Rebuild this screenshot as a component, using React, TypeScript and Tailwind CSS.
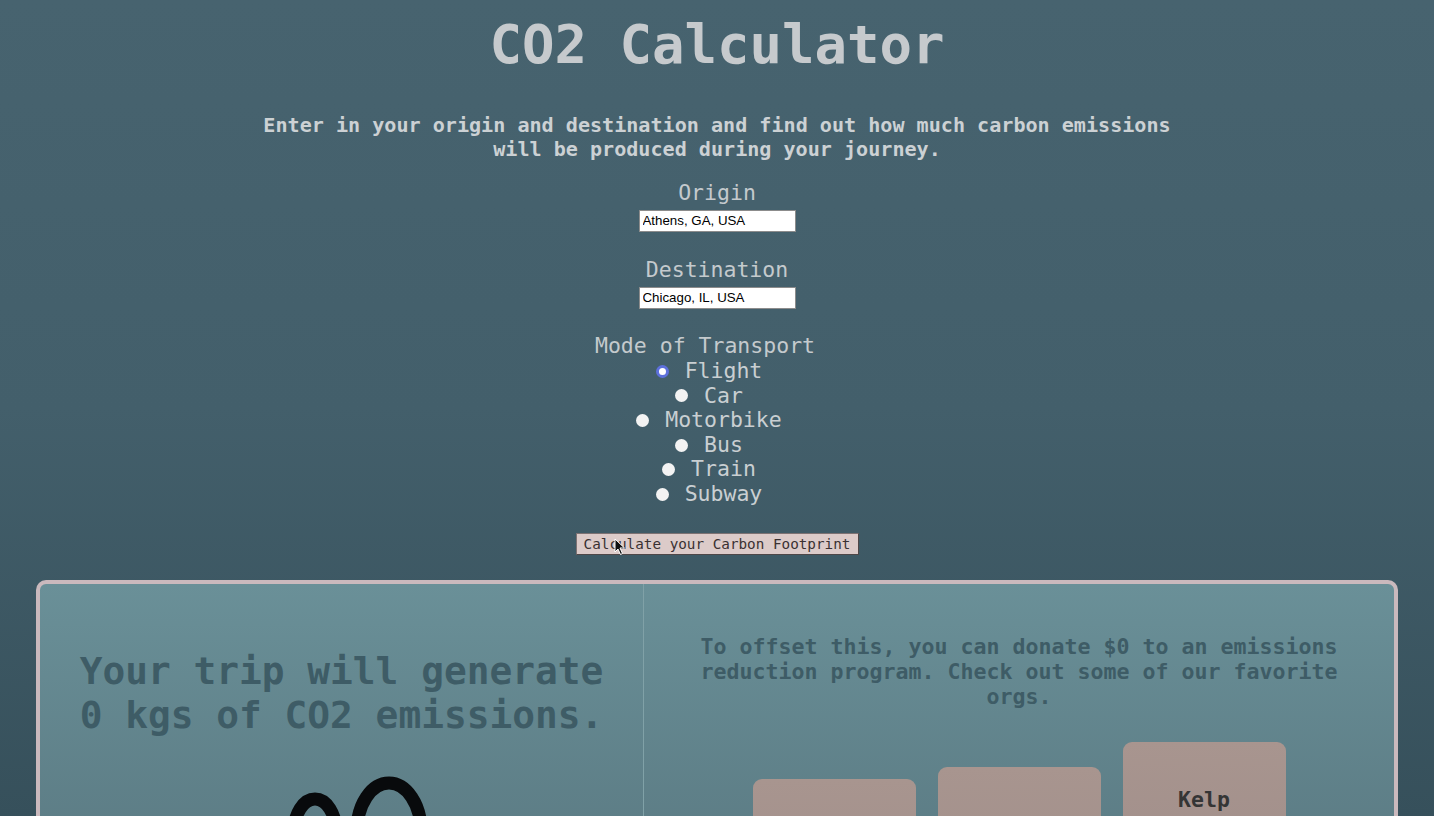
// App.tsx - CO2 calculator page
const mono = { fontFamily: '"DejaVu Sans Mono", "Liberation Mono", monospace' };

const modes = ["Flight", "Car", "Motorbike", "Bus", "Train", "Subway"];

const orgs = [
  { name: "Cool Effect", offset: "mt-[37px]" },
  { name: "Terrapass", offset: "mt-[25px]" },
  { name: "Kelp Forest Alliance", offset: "mt-0" },
];

const App = () => {
  return (
    <div
      className="h-screen overflow-hidden bg-gradient-to-b from-[#47636f] via-[#435f6b] to-[#36505b] text-center"
      style={mono}
    >
      {/* Titulo */}
      <h1 className="pt-[12px] text-[54px] leading-[66px] font-bold text-[#c6cacd]">
        CO2 Calculator
      </h1>

      <p className="mt-[35px] text-[20.1px] leading-[24px] font-bold text-[#ccd1d4]">
        Enter in your origin and destination and find out how much carbon emissions
        <br />
        will be produced during your journey.
      </p>

      {/* Formulario */}
      <div className="mt-[19px] flex flex-col items-center text-[21.5px] leading-[26px] text-[#c4cacd]">
        <label>Origin</label>
        <input
          readOnly
          value="Athens, GA, USA"
          className="mt-[4px] h-[22px] w-[157px] border border-[#8c8c8c] bg-white px-[3px] text-[13.3px] text-black outline-none"
          style={{ fontFamily: '"Liberation Sans", Arial, sans-serif' }}
        />

        <label className="mt-[25px]">Destination</label>
        <input
          readOnly
          value="Chicago, IL, USA"
          className="mt-[4px] h-[22px] w-[157px] border border-[#8c8c8c] bg-white px-[3px] text-[13.3px] text-black outline-none"
          style={{ fontFamily: '"Liberation Sans", Arial, sans-serif' }}
        />

        <label className="mt-[24px] pr-[24px]">Mode of Transport</label>
        <div className="flex flex-col items-center leading-[24.6px] text-[#c9cfd2]">
          {modes.map((m, i) => (
            <div key={m} className="flex items-center pr-[21px]">
              {i === 0 ? (
                <span className="ml-[5px] mr-[3px] h-[13px] w-[13px] rounded-full border-[3px] border-[#5d70dc] bg-white"></span>
              ) : (
                <span className="ml-[5px] mr-[3px] h-[13px] w-[13px] rounded-full bg-[#f3f3f3]"></span>
              )}
              <span className="whitespace-pre">{" " + m}</span>
            </div>
          ))}
        </div>

        <div className="relative mt-[22px]">
          <button className="h-[22px] w-[283px] border border-[#7d7273] border-b-[#4f4748] border-r-[#4f4748] bg-[#dccbc9] text-[14.3px] leading-[20px] text-[#3a3132]">
            Calculate your Carbon Footprint
          </button>
          {/* cursor */}
          <svg className="absolute left-[38px] top-[9px]" width="12" height="18" viewBox="0 0 12 18">
            <path d="M1 1 L1 14 L4 11 L6.5 16.5 L8.5 15.5 L6 10 L10.5 10 Z" fill="#111" stroke="#fff" strokeWidth="1" />
          </svg>
        </div>
      </div>

      {/* Resultado */}
      <div className="mx-[36px] mt-[25px] flex rounded-t-[10px] border-[4px] border-b-0 border-[#cab9bd] bg-gradient-to-b from-[#6a9098] to-[#55727b] h-[400px]">
        <div className="w-[604px] border-r border-[#80a1a7] pt-[65px] flex flex-col items-center">
          <p className="text-[37.8px] leading-[44px] font-bold text-[#3e5c66]">
            Your trip will generate
            <br />
            0 kgs of CO2 emissions.
          </p>
          <svg className="mt-[33px]" width="180" height="120" viewBox="0 0 180 120">
            <ellipse cx="63" cy="62" rx="21" ry="33" fill="none" stroke="#080a0c" strokeWidth="13" />
            <ellipse cx="137" cy="61" rx="32" ry="48" fill="none" stroke="#080a0c" strokeWidth="13" />
          </svg>
        </div>

        <div className="flex-1 pt-[50px] flex flex-col items-center">
          <p className="w-[670px] text-[21.6px] leading-[25px] font-bold text-[#3e5c66]">
            To offset this, you can donate $0 to an emissions reduction program. Check out some of our favorite orgs.
          </p>
          <div className="mt-[33px] flex items-start justify-center gap-[22px]">
            {orgs.map((o) => (
              <div
                key={o.name}
                className={`${o.offset} h-[160px] w-[163px] rounded-[9px] bg-gradient-to-b from-[#a8958f] to-[#9f8d89] px-4 pt-[45px] text-[21.5px] leading-[25px] font-bold text-[#353535]`}
              >
                {o.name}
              </div>
            ))}
          </div>
        </div>
      </div>
    </div>
  );
};

export default App;
